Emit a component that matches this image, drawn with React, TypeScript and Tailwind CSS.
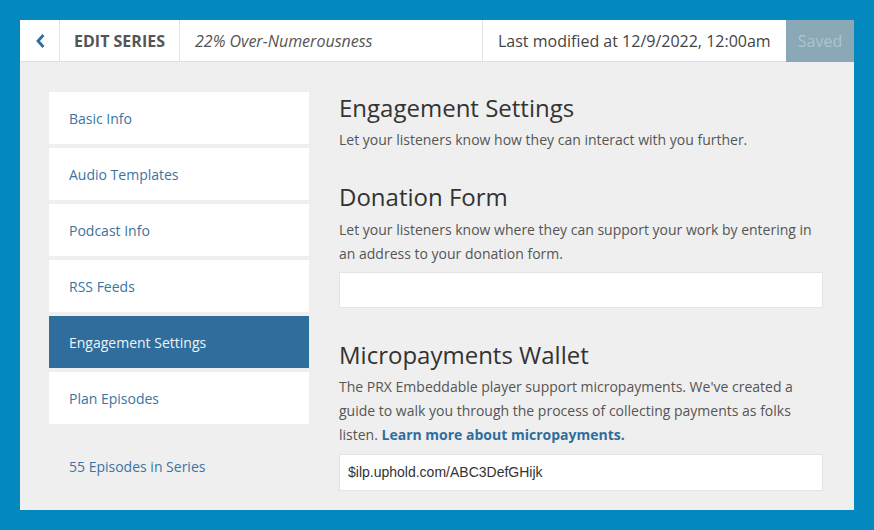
import React from "react";

const navItems = [
  "Basic Info",
  "Audio Templates",
  "Podcast Info",
  "RSS Feeds",
  "Engagement Settings",
  "Plan Episodes",
];

export default function App() {
  return (
    <div
      className="w-[874px] h-[530px] bg-[#0389bd] p-[20px] pr-[20px] overflow-hidden"
      style={{ fontFamily: '"Open Sans", sans-serif' }}
    >
      <div className="w-[834px] h-[490px] bg-[#efefef] flex flex-col">
        {/* Header */}
        <div className="h-[42px] bg-white border-b border-[#dedede] flex items-stretch text-[16px]">
          <div className="w-[40px] shrink-0 border-r border-[#e2e2e2] flex items-center justify-center">
            <svg width="10" height="14" viewBox="0 0 10 14">
              <path d="M7.5 2 L3 7 L7.5 12" fill="none" stroke="#2e6e9e" strokeWidth="2.8" strokeLinecap="square" />
            </svg>
          </div>
          <div className="w-[120px] shrink-0 border-r border-[#e2e2e2] flex items-center justify-center whitespace-nowrap font-bold text-[#555]">
            EDIT SERIES
          </div>
          <div className="flex-1 flex items-center px-[15px] italic text-[#555] whitespace-nowrap">
            22% Over-Numerousness
          </div>
          <div className="w-[304px] shrink-0 border-l border-[#e2e2e2] flex items-center px-[15px] text-[#444] whitespace-nowrap">
            Last modified at 12/9/2022, 12:00am
          </div>
          <div className="w-[68px] shrink-0 bg-[#8aa8b5] flex items-center justify-center text-[#adc5cf] -mb-px">
            Saved
          </div>
        </div>

        {/* Body */}
        <div className="flex pt-[30px] pl-[29px]">
          <div className="w-[260px] flex flex-col gap-[4px]">
            {navItems.map((item) => (
              <div
                key={item}
                className={
                  item === "Engagement Settings"
                    ? "h-[52px] flex items-center px-[20px] text-[14px] bg-[#2f6e9c] text-[#eef3f7]"
                    : "h-[52px] flex items-center px-[20px] text-[14px] bg-white text-[#3b74a2]"
                }
              >
                {item}
              </div>
            ))}
            <div className="h-[52px] mt-[12px] flex items-center px-[20px] text-[14px] text-[#3b74a2]">
              55 Episodes in Series
            </div>
          </div>

          <div className="w-[484px] ml-[30px] text-[#555]">
            <h1 className="text-[24px] leading-[32px] text-[#333]">Engagement Settings</h1>
            <p className="mt-[4px] text-[14px] leading-[24px]">
              Let your listeners know how they can interact with you further.
            </p>

            <h2 className="mt-[29px] text-[24px] leading-[32px] text-[#333]">Donation Form</h2>
            <p className="mt-[5px] text-[14px] leading-[24px]">
              Let your listeners know where they can support your work by entering in an address to your donation form.
            </p>
            <div className="mt-[6px] h-[36px] bg-white border border-[#e4e4e4]" />

            <h2 className="mt-[31px] text-[24px] leading-[32px] text-[#333]">Micropayments Wallet</h2>
            <p className="mt-[4px] text-[14px] leading-[24px]">
              The PRX Embeddable player support micropayments. We've created a guide to walk you through the process of collecting payments as folks listen.{" "}
              <span className="font-bold text-[#2e6e9e]">Learn more about micropayments.</span>
            </p>
            <div
              className="mt-[7px] h-[37px] bg-white border border-[#e4e4e4] flex items-center px-[8px] text-[14px] text-[#333]"
              style={{ fontFamily: '"Liberation Sans", Arial, sans-serif' }}
            >
              $ilp.uphold.com/ABC3DefGHijk
            </div>
          </div>
        </div>
      </div>
    </div>
  );
}
